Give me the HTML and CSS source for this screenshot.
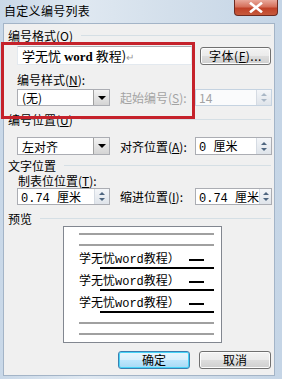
FILE: index.html
```html
<!DOCTYPE html>
<html lang="zh-CN">
<head>
    <meta charset="UTF-8">
    <title>自定义编号列表</title>
<link rel="stylesheet" href="styles.css">
</head>
<body>
    <div class="window">
        <div class="titlebar">
            <span class="title">自定义编号列表</span>
            <div class="close">
                <svg width="14" height="11" viewBox="0 0 14 11"><path d="M2 1.5 L12 9.5 M12 1.5 L2 9.5" stroke="#fff" stroke-width="2.6" stroke-linecap="square"/></svg>
            </div>
        </div>

        <div class="client">
            <!-- 编号格式 -->
            <div class="group-hdr hdr-first"><span>编号格式(<u>O</u>)</span></div>
            <div class="row fmt-row">
                <div class="textbox fmt-text">学无忧 <span class="serif">word</span> 教程)<span class="ret">↵</span></div>
                <div class="btn font-btn">字体(<u>F</u>)...</div>
            </div>
            <div class="sub-label lbl-style">编号样式(<u>N</u>):</div>
            <div class="row row-style">
                <div class="combo"><span class="val">(无)</span><span class="drop"><i></i></span></div>
                <div class="row-label disabled">起始编号(<u>S</u>):</div>
                <div class="spin disabled"><span class="val">14</span><span class="spin-btn"><i class="up"></i><i class="down"></i></span></div>
            </div>

            <!-- 编号位置 -->
            <div class="group-hdr hdr-pos"><span>编号位置(<u>U</u>)</span></div>
            <div class="row row-align">
                <div class="combo"><span class="val">左对齐</span><span class="drop"><i></i></span></div>
                <div class="row-label">对齐位置(<u>A</u>):</div>
                <div class="spin"><span class="val mono">0 厘米</span><span class="spin-btn"><i class="up"></i><i class="down"></i></span></div>
            </div>

            <!-- 文字位置 -->
            <div class="group-hdr hdr-text"><span>文字位置</span></div>
            <div class="sub-label lbl-tab">制表位位置(<u>T</u>):</div>
            <div class="row row-tab">
                <div class="spin spin-wide"><span class="val mono">0.74 厘米</span><span class="spin-btn"><i class="up"></i><i class="down"></i></span></div>
                <div class="row-label">缩进位置(<u>I</u>):</div>
                <div class="spin"><span class="val mono">0.74 厘米</span><span class="spin-btn"><i class="up"></i><i class="down"></i></span></div>
            </div>

            <!-- 预览 -->
            <div class="group-hdr hdr-preview"><span>预览</span></div>
            <div class="preview">
                <div class="pv-gray"></div>
                <div class="pv-gray gap"></div>
                <div class="pv-text first">学无忧<span class="mono">word</span>教程）<span class="dash"></span></div>
                <div class="pv-black"></div>
                <div class="pv-text">学无忧<span class="mono">word</span>教程）<span class="dash"></span></div>
                <div class="pv-black"></div>
                <div class="pv-text">学无忧<span class="mono">word</span>教程）<span class="dash"></span></div>
                <div class="pv-black"></div>
                <div class="pv-gray after"></div>
                <div class="pv-gray gap"></div>
            </div>

            <div class="buttons">
                <div class="btn default">确定</div>
                <div class="btn">取消</div>
            </div>
        </div>

        <div class="highlight"></div>
    </div>
</body>
</html>
```

FILE: styles.css
```css
body {
    margin: 0;
    font-family: "Noto Sans CJK SC", "Liberation Sans", sans-serif;
    font-size: 12px;
    color: #000;
}

u {
    text-decoration: underline;
}

.window {
    position: relative;
    width: 282px;
    height: 379px;
    box-sizing: border-box;
    padding: 0 7px 3px 3px;
    display: flex;
    flex-direction: column;
    background: linear-gradient(90deg, #c9d8e8 0%, #dfe8f1 30%, #d3dfeb 60%, #c5d5e6 100%);
}

/* title bar */
.titlebar {
    height: 23px;
    display: flex;
    justify-content: space-between;
    align-items: flex-start;
    flex-shrink: 0;
}

.title {
    margin: 4px 0 0 1px;
    font-size: 12px;
    line-height: 14px;
    letter-spacing: 0.3px;
}

.close {
    width: 44px;
    height: 16px;
    margin-right: -3px;
    box-sizing: border-box;
    border: 1px solid #6d2a20;
    border-top: none;
    border-radius: 0 0 4px 4px;
    background: linear-gradient(#e9a99b 0%, #d5705b 45%, #c04128 55%, #c65a3c 100%);
    display: flex;
    justify-content: center;
    align-items: center;
}

/* client area */
.client {
    flex: 1;
    background: #f0f0f0;
    border: 1px solid #a3b4c7;
    padding-right: 1px;
    display: flex;
    flex-direction: column;
}

.group-hdr {
    display: flex;
    align-items: center;
    height: 13px;
    line-height: 13px;
    padding-left: 4px;
}

.group-hdr::after {
    content: "";
    flex: 1;
    height: 1px;
    background: #d5dfe5;
    margin: 0 2px 0 8px;
}

.hdr-first { margin-top: 5px; }
.hdr-pos { margin-top: 7px; }
.hdr-text { margin-top: 4px; }
.hdr-preview { margin-top: 7px; }

.sub-label {
    height: 13px;
    line-height: 13px;
    padding-left: 13px;
}

.lbl-style { margin-top: 8px; }
.lbl-tab { margin-top: 2px; padding-left: 14px; }

.row {
    display: flex;
    align-items: center;
    padding-left: 13px;
}

.fmt-row { margin-top: 4px; height: 19px; }
.row-style { margin-top: 3px; height: 17px; }
.row-align { margin-top: 11px; height: 18px; }
.row-tab { margin-top: 1px; height: 17px; }

.row-label {
    width: 75px;
    margin-left: 10px;
    white-space: nowrap;
}

.disabled {
    color: #a3a3a3;
}

/* text box */
.textbox {
    width: 175px;
    height: 19px;
    box-sizing: border-box;
    background: #fff;
    border: 1px solid #e3e9ef;
    border-top-color: #abadb3;
    padding-left: 4px;
    font-size: 13px;
    line-height: 17px;
    white-space: nowrap;
}

.serif {
    font-family: "Liberation Serif", serif;
    font-weight: bold;
    font-size: 13px;
}

.ret {
    color: #9a9a9a;
    font-size: 10px;
}

/* buttons */
.btn {
    width: 72px;
    height: 18px;
    box-sizing: border-box;
    border: 1px solid #707070;
    border-radius: 3px;
    background: linear-gradient(#f3f3f3 0%, #ebebeb 48%, #dddddd 52%, #cfcfcf 100%);
    box-shadow: inset 0 0 0 1px #fcfcfc;
    display: flex;
    justify-content: center;
    align-items: center;
    font-size: 12px;
    line-height: 14px;
}

.font-btn {
    width: 71px;
    margin-left: 8px;
    height: 18px;
    letter-spacing: 0.5px;
}

.btn.default {
    border-color: #3c7fb1;
    box-shadow: inset 0 0 0 1px #48d4f7;
    background: linear-gradient(#eaf6fd 0%, #d9f0fc 48%, #bee6fd 52%, #a7d9f5 100%);
}

/* combo box */
.combo {
    width: 93px;
    height: 100%;
    box-sizing: border-box;
    background: #fff;
    border: 1px solid #abadb3;
    display: flex;
    align-items: center;
    justify-content: space-between;
}

.combo .val {
    padding-left: 4px;
}

.drop {
    width: 16px;
    height: 100%;
    box-sizing: border-box;
    border-left: 1px solid #a0a0a0;
    background: linear-gradient(#f2f2f2, #d4d4d4);
    display: flex;
    justify-content: center;
    align-items: center;
}

.drop i {
    width: 0;
    height: 0;
    border-left: 4px solid transparent;
    border-right: 4px solid transparent;
    border-top: 4px solid #000;
}

/* spin box */
.spin {
    width: 77px;
    height: 100%;
    box-sizing: border-box;
    background: #fff;
    border: 1px solid #abadb3;
    display: flex;
    align-items: center;
    justify-content: space-between;
}

.spin-wide {
    width: 93px;
}

.spin .val {
    padding-left: 3px;
    white-space: nowrap;
}

.spin.disabled {
    border-color: #c5d3e1;
    background: #fafbfc;
}

.mono {
    font-family: "Liberation Mono", "Noto Sans CJK SC", monospace;
    font-size: 12px;
}

.spin-btn {
    width: 15px;
    height: 100%;
    box-sizing: border-box;
    border-left: 1px solid #d5dbe3;
    background: linear-gradient(#f4f6f9, #dfe4ea);
    display: flex;
    flex-direction: column;
    justify-content: space-around;
    align-items: center;
    padding: 2px 0;
}

.spin-btn i {
    width: 0;
    height: 0;
    border-left: 3px solid transparent;
    border-right: 3px solid transparent;
}

.spin-btn .up {
    border-bottom: 3px solid #4f6680;
}

.spin-btn .down {
    border-top: 3px solid #4f6680;
}

.spin.disabled .spin-btn .up {
    border-bottom-color: #a9b7c6;
}

.spin.disabled .spin-btn .down {
    border-top-color: #a9b7c6;
}

/* preview */
.preview {
    width: 159px;
    height: 117px;
    box-sizing: border-box;
    margin: 1px 0 0 59px;
    background: #fff;
    border: 1px solid #828790;
    padding: 6px 0 0 15px;
}

.pv-gray {
    width: 135px;
    height: 2px;
    background: #a0a0a0;
}

.pv-gray.gap { margin-top: 9px; }
.pv-gray.after { margin-top: 9px; }

.pv-text {
    height: 14px;
    line-height: 14px;
    margin-top: 4px;
    white-space: nowrap;
}

.pv-text.first { margin-top: 5px; }

.dash {
    display: inline-block;
    width: 15px;
    height: 2px;
    background: #000;
    vertical-align: middle;
    margin-left: 9px;
}

.pv-black {
    width: 114px;
    height: 2px;
    margin: 2px 0 0 21px;
    background: #000;
}

.buttons {
    display: flex;
    justify-content: flex-end;
    gap: 9px;
    margin-top: 8px;
    padding-right: 2px;
}

/* red annotation frame */
.highlight {
    position: absolute;
    left: 1px;
    top: 42px;
    width: 194px;
    height: 77px;
    box-sizing: border-box;
    border: 3px solid #c5222b;
}
```
